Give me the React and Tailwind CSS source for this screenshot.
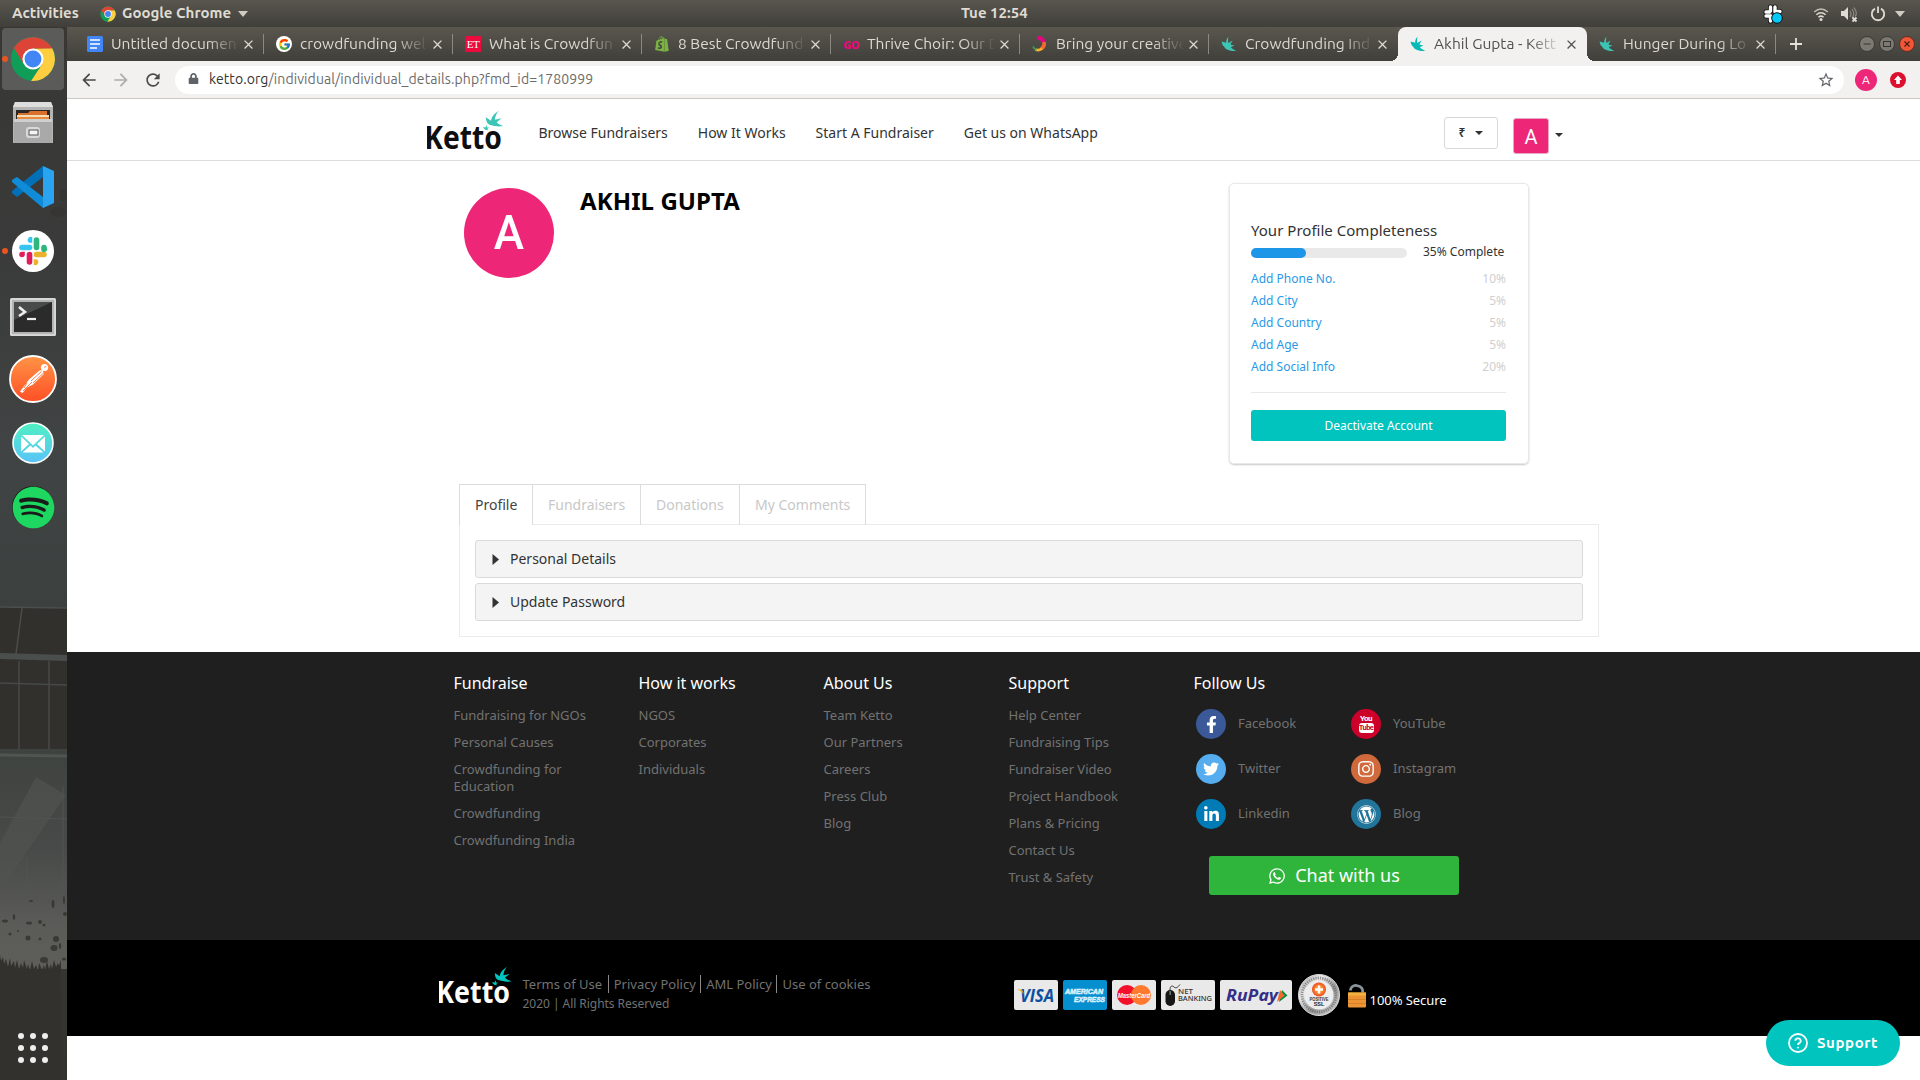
import React from "react";
import {
  FaFacebookF,
  FaTwitter,
  FaLinkedinIn,
  FaInstagram,
  FaWordpress,
  FaWhatsapp,
  FaShopify,
  FaSpotify,
  FaLock,
} from "react-icons/fa";
import { FcGoogle } from "react-icons/fc";
import { MdArrowBack, MdArrowForward, MdRefresh, MdStarBorder, MdClose } from "react-icons/md";

const UI = "font-['Ubuntu','Noto_Sans',sans-serif]";

function ChromeLogo({ className }) {
  return (
    <svg viewBox="0 0 48 48" className={className}>
      <circle cx="24" cy="24" r="23" fill="#0f9d58" />
      <path d="M43.9 12.500A23 23 0 0 1 22 46.900L33.500 29.500L24 13Z" fill="#ffcd40" />
      <path d="M4.100 12.500A23 23 0 0 1 43.900 13H24L14.500 29.500Z" fill="#db4437" />
      <circle cx="24" cy="24" r="11" fill="#fff" />
      <circle cx="24" cy="24" r="8.800" fill="#4285f4" />
    </svg>
  );
}

function KettoLogo({ className, color, bird }) {
  return (
    <svg viewBox="0 0 220 115" className={className} preserveAspectRatio="none">
      <text
        x="-8"
        y="112"
        fontSize="92"
        fontWeight="700"
        fontFamily="'Noto Sans',sans-serif"
        textLength="222"
        lengthAdjust="spacingAndGlyphs"
        fill={color}
      >
        Ketto
      </text>
      <g fill={bird}>
        <path d="M205 2 C190 12 184 20 183 31 L168 21 C169 36 174 42 184 44 C197 48 208 48 219 46 C208 43 202 39 199 35 L213 24 L194 28 C195 18 198 10 205 2Z" />
        <path d="M159 49 L167 50 L171 43 L172 50 L178 50 L173 54 L174 58 L166 57 Z" />
      </g>
    </svg>
  );
}

function BirdIcon({ color }) {
  return (
    <svg viewBox="0 0 16 16" className="size-4 shrink-0" fill={color}>
      <path d="M7.6 .6 C5.8 2.4 5 4.6 5.2 6.8 L0.6 5.4 C1 8.2 1.8 9.4 3 10.4 C4.5 13.6 9.5 15.4 15.6 14.8 C13 14 11 12.6 9.8 11 L13.6 9.8 L9.4 8.6 L11.6 4.6 L7.4 7 C6.8 4.8 7 2.6 7.6 .6Z" />
    </svg>
  );
}

function DocsIcon() {
  return (
    <svg viewBox="0 0 16 16" className="size-4 shrink-0">
      <rect width="16" height="16" rx="1.5" fill="#4285f4" />
      <path d="M3 4h10M3 8h10M3 12h7" stroke="#fff" strokeWidth="1.7" />
    </svg>
  );
}

function GoogleIcon() {
  return (
    <span className="flex size-4 shrink-0 items-center justify-center rounded-full bg-white">
      <FcGoogle className="size-[13px]" />
    </span>
  );
}

function EtIcon() {
  return (
    <span className="flex size-4 shrink-0 items-center justify-center bg-[#ec0b3f] font-['Liberation_Serif',serif] text-[11px] leading-none tracking-tighter text-white">
      ET
    </span>
  );
}

function ShopifyIcon() {
  return <FaShopify className="size-4 shrink-0 text-[#7ab342]" />;
}

function GoIcon() {
  return (
    <span className="flex size-4 shrink-0 items-center justify-center font-['Noto_Sans',sans-serif] text-[11px] font-extrabold leading-none tracking-tighter text-[#f0047f]">
      GO
    </span>
  );
}

function SwirlIcon() {
  return (
    <svg viewBox="0 0 16 16" className="size-4 shrink-0" fill="none" strokeWidth="3.6">
      <path d="M5.5 2 C9 1.4 11.5 4 11.6 7" stroke="#e0087f" strokeWidth="4.2" />
      <path d="M12 6 C12.6 9 11.5 11.5 9 12.8" stroke="#f26a2e" />
      <path d="M10 12.4 C7.5 14.4 5 14.4 3.5 13.4" stroke="#f6b32f" strokeWidth="2.6" />
      <path d="M4.5 14 C2.6 13.4 1.4 12 1 10.4" stroke="#36a651" strokeWidth="1.8" />
    </svg>
  );
}

const TABS = [
  { icon: <DocsIcon />, title: "Untitled documen" },
  { icon: <GoogleIcon />, title: "crowdfunding wel" },
  { icon: <EtIcon />, title: "What is Crowdfun" },
  { icon: <ShopifyIcon />, title: "8 Best Crowdfund" },
  { icon: <GoIcon />, title: "Thrive Choir: Our D" },
  { icon: <SwirlIcon />, title: "Bring your creative" },
  { icon: <BirdIcon color="#3cc4b4" />, title: "Crowdfunding Ind" },
  { icon: <BirdIcon color="#05b9b6" />, title: "Akhil Gupta - Kett", active: true },
  { icon: <BirdIcon color="#3cc4b4" />, title: "Hunger During Lo" },
];

function BrowserTab({ icon, title, active, divider }) {
  return (
    <div
      className={
        active
          ? "relative flex h-full w-[189px] shrink-0 items-center rounded-t-lg bg-[#f2f1ef] pl-3 text-[#51514d]"
          : "relative flex h-full w-[189px] shrink-0 items-center pl-3 text-[#dcdad3]"
      }
    >
      {icon}
      <span className="ml-2 w-[130px] shrink-0 whitespace-nowrap text-[15.5px] leading-5 [mask-image:linear-gradient(to_right,#000_74%,transparent_99%)]">
        {title}
      </span>
      <MdClose className="size-[15px] shrink-0" />
      {divider && <span className="absolute right-0 top-[7px] h-5 w-px bg-[#8b8982]" />}
      {active && (
        <>
          <span className="absolute -left-2 bottom-0 size-2 bg-[radial-gradient(circle_at_0_0,transparent_8px,#f2f1ef_8px)]" />
          <span className="absolute -right-2 bottom-0 size-2 bg-[radial-gradient(circle_at_100%_0,transparent_8px,#f2f1ef_8px)]" />
        </>
      )}
    </div>
  );
}

function SystemBar() {
  return (
    <header
      className={`${UI} flex h-[27px] shrink-0 items-center bg-gradient-to-b from-[#59564f] to-[#403f3a] text-[15px] font-bold text-[#dfdbd2]`}
    >
      <div className="flex w-[900px] items-center">
        <span className="ml-3 w-[68px]">Activities</span>
        <ChromeLogo className="ml-5 size-[16px]" />
        <span className="ml-[6px] w-[112px] whitespace-nowrap">Google Chrome</span>
        <svg viewBox="0 0 10 6" className="ml-[4px] h-[6px] w-[10px]" fill="#cfccc4">
          <path d="M0 0h10L5 6z" />
        </svg>
      </div>
      <div className="w-[190px] whitespace-nowrap pl-[61px]">Tue 12:54</div>
      <div className="ml-auto flex items-center pr-[15px]">
        <svg viewBox="0 0 20 20" className="mr-[30px] size-5">
          <g stroke="#111" strokeWidth="5" strokeLinecap="round">
            <path d="M7.500 3v4M12 3v5M3 8h4M13 7.500h4M3 12h5M7.500 13v4" />
          </g>
          <g stroke="#fff" strokeWidth="3.400" strokeLinecap="round">
            <path d="M7.500 3v4M12 3v5M3 8h4M13 7.500h4M3 12h5M7.500 13v4" />
          </g>
          <circle cx="14" cy="14" r="5.300" fill="#00c8f8" stroke="#111" />
        </svg>
        <svg viewBox="0 0 16 16" className="mr-[11px] size-4" fill="none" stroke="#dfdbd2" strokeWidth="1.500">
          <path d="M1.200 6 Q8 0 14.800 6" opacity=".8" />
          <path d="M3.400 8.800 Q8 4.600 12.600 8.800" />
          <path d="M5.400 11.200 Q8 9 10.600 11.200" />
          <circle cx="8" cy="13.600" r="1.500" fill="#dfdbd2" stroke="none" />
        </svg>
        <svg viewBox="0 0 18 18" className="mr-[12px] size-[18px]" fill="none" stroke="#dfdbd2" strokeWidth="1.200">
          <path d="M1 6h3l4-4v13l-4-4H1z" fill="#dfdbd2" stroke="none" />
          <path d="M10 6q2 3 0 6M12 4q3.500 5 0 9M14 2.500q4 6 1 9" opacity=".45" />
          <path d="M12.500 12.500l4 4M16.500 12.500l-4 4" strokeWidth="1.800" />
        </svg>
        <svg viewBox="0 0 16 16" className="mr-[9px] size-4" fill="none" stroke="#dfdbd2" strokeWidth="1.800">
          <path d="M5 2.600a6.200 6.200 0 1 0 6 0M8 .5v6.500" />
        </svg>
        <svg viewBox="0 0 10 6" className="h-[6px] w-[10px]" fill="#cfccc4">
          <path d="M0 0h10L5 6z" />
        </svg>
      </div>
    </header>
  );
}

const DEBRIS = [
  [5, 362, 3, 1.5], [14, 358, 1.2, 3], [29, 364, 3, 1.5], [31, 342, 2, 1], [40, 363, 2, 2], [44, 366, 1.5, 1.5],
  [53, 345, 1.5, 4], [64, 341, 1, 4], [65, 355, 2, 2], [56, 380, 3, 3], [54, 389, 3.5, 3], [60, 387, 1.2, 3],
  [44, 401, 4, 3], [28, 379, 2.5, 2.5], [10, 375, 1.5, 1.5], [18, 372, 1, 1], [40, 380, 1.5, 1.5], [64, 400, 2, 1.5],
];

function DockBackdrop() {
  return (
    <svg viewBox="0 0 67 1053" className="absolute inset-0 h-full w-full" preserveAspectRatio="none">
      <defs>
        <linearGradient id="dockBase" x1="0" y1="0" x2="0" y2="1">
          <stop offset="0" stopColor="#383734" />
          <stop offset=".2" stopColor="#393a39" />
          <stop offset=".4" stopColor="#414444" />
          <stop offset=".55" stopColor="#3c403f" />
          <stop offset="1" stopColor="#33332f" />
        </linearGradient>
        <linearGradient id="dockField" x1="0" y1="0" x2="0" y2="1">
          <stop offset="0" stopColor="#3f4340" />
          <stop offset=".45" stopColor="#474a48" />
          <stop offset=".8" stopColor="#5b5b58" />
          <stop offset="1" stopColor="#5e5e59" />
        </linearGradient>
      </defs>
      <rect width="67" height="1053" fill="url(#dockBase)" />
      <g fill="#34322f" opacity=".6">
        <ellipse cx="58" cy="185" rx="8" ry="5" />
        <ellipse cx="26" cy="105" rx="6" ry="4" />
        <ellipse cx="50" cy="170" rx="5" ry="4" />
        <ellipse cx="63" cy="168" rx="4" ry="6" />
        <ellipse cx="32" cy="229" rx="3" ry="2" />
      </g>
      <rect y="580" width="67" height="147" fill="#32302d" />
      <path d="M0 580L67 581" stroke="#4b4f4f" strokeWidth="1.500" />
      <path d="M22 581L16 627" stroke="#4b4d4b" strokeWidth="1.500" />
      <path d="M0 626L67 628V634L0 632Z" fill="#4a4e4d" />
      <path d="M0 656L67 658M19 634V726M49 634V726" stroke="#464947" strokeWidth="1.500" />
      <rect y="722" width="67" height="220" fill="url(#dockField)" />
      <path d="M0 728L67 729" stroke="#505452" strokeWidth="3" />
      <path d="M36 750L66 768L0 864V816Z" fill="#50524e" opacity=".7" />
      <path d="M0 790L67 792M27 830V872M63 760V872" stroke="#505452" strokeWidth="1" />
      <g transform="translate(0 532)" fill="#3a3936">
        {DEBRIS.map(([x, y, rx, ry], i) => (
          <ellipse key={i} cx={x} cy={y} rx={rx} ry={ry} />
        ))}
      </g>
      <path
        d="M0 928l1 6 2-4 1 7 2-5 2 8 2-9 1 8 3-5 1 7 2-8 2 9 2-6 2 5 1-8 3 9 1-5 2 6 2-9 2 8 2-4 2 6 1-8 3 7 2-5 1 5 2-9 2 8 2-5 1 5 2-9 2 7 2-4 1 3 2-6V1053H0Z"
        fill="#32312d"
      />
    </svg>
  );
}

function FilesIcon() {
  return (
    <svg viewBox="0 0 44 44" className="size-[44px]">
      <path d="M4 1h36l2 5v36H2V6z" fill="#b5b5b5" />
      <path d="M4 1h36l2 5H2z" fill="#dedede" />
      <rect x="5" y="9" width="34" height="12" fill="#2b2724" />
      <path d="M7 12h10l2-2h17v10H7z" fill="#d9702b" />
      <path d="M6 14h32v5H6z" fill="#f5ddb5" />
      <path d="M6 16h32v2H6z" fill="#e8893c" />
      <rect x="3" y="18" width="38" height="24" fill="#a9a9a9" />
      <path d="M3 18h38v3H3z" fill="#cfcfcf" />
      <rect x="15" y="26" width="14" height="11" rx="3" fill="#d8d8d8" />
      <rect x="18" y="29" width="9" height="5" fill="#f4f4f4" stroke="#555" />
    </svg>
  );
}

function CodeIcon() {
  return (
    <svg viewBox="0 0 44 44" className="size-[44px]">
      <path d="M32 1L32 12L6 32L1 28V26Z" fill="#0270b8" />
      <path d="M32 43V32L6 12L1 15V17Z" fill="#0f8bd8" />
      <path d="M32 1L43 6V38L32 43Z" fill="#2aa3f0" />
    </svg>
  );
}

function SlackIcon() {
  return (
    <svg viewBox="0 0 42 42" className="size-[42px]">
      <circle cx="21" cy="21" r="21" fill="#fff" />
      <g strokeWidth="5.600" strokeLinecap="round">
        <path d="M10 17.500h7.500" stroke="#36c5f0" />
        <path d="M24.500 10v7.500" stroke="#2eb67d" />
        <path d="M24.500 24.500h7.500" stroke="#ecb22e" />
        <path d="M17.500 24.500v7.500" stroke="#e01e5a" />
      </g>
      <path d="M20.300 7.200v5.600h-2.800a2.800 2.800 0 1 1 2.800-5.600z" fill="#36c5f0" />
      <path d="M34.800 17.500a2.800 2.800 0 0 1-5.600 2.800v-2.800a2.800 2.800 0 0 1 5.600 0z" fill="#2eb67d" />
      <path d="M21.700 34.800v-5.600h2.800a2.800 2.800 0 1 1-2.800 5.600z" fill="#ecb22e" />
      <path d="M7.200 24.500a2.800 2.800 0 0 1 2.800-2.800h2.800v2.800a2.800 2.800 0 0 1-5.600 0z" fill="#e01e5a" />
    </svg>
  );
}

function TerminalIcon() {
  return (
    <svg viewBox="0 0 46 38" className="mt-1 h-[38px] w-[46px]">
      <rect width="46" height="38" rx="1.500" fill="#d6d6d6" />
      <rect x="2" y="2" width="42" height="34" fill="#b3b3b3" />
      <rect x="4" y="4" width="38" height="30" fill="#2a2b2a" />
      <path d="M4 4h38L4 22z" fill="#494b4a" />
      <path d="M9 9l6 5-6 4" fill="none" stroke="#eee" strokeWidth="2.500" />
      <path d="M17 21h9" stroke="#eee" strokeWidth="2.200" />
    </svg>
  );
}

function PostmanIcon() {
  return (
    <svg viewBox="0 0 48 48" className="size-[48px]">
      <defs>
        <linearGradient id="pm" x1="0" y1="0" x2="0" y2="1">
          <stop offset="0" stopColor="#ff9445" />
          <stop offset="1" stopColor="#ff4f26" />
        </linearGradient>
      </defs>
      <circle cx="24" cy="24" r="23" fill="url(#pm)" stroke="#fff" strokeWidth="1.800" />
      <circle cx="35.500" cy="12.500" r="3.600" fill="#fff" />
      <path d="M34 15L30.500 15.500 20 24.500 11 36.500 13.500 38 18 32.500 24 29.500 34.500 19.500Z" fill="#fff" />
      <path d="M32.500 16.500L22 26M34 18.500L24 28M18 28L15 33M14 36L23 27" stroke="#ff7038" strokeWidth=".9" />
      <path d="M35 12.500l2.500-1.500" stroke="#ff7038" strokeWidth=".8" />
    </svg>
  );
}

function MailIcon() {
  return (
    <svg viewBox="0 0 42 42" className="size-[42px]">
      <defs>
        <linearGradient id="ml" x1="0" y1="0" x2="0" y2="1">
          <stop offset="0" stopColor="#4ff0c2" />
          <stop offset="1" stopColor="#5ac3f8" />
        </linearGradient>
      </defs>
      <circle cx="21" cy="21" r="20" fill="url(#ml)" stroke="#fff" strokeWidth="1.600" />
      <path d="M10 13h22L21 23.500zM9 14.500L17 22 9 29.500zM33 14.500V29.500L25 22zM10.500 30.500L18.500 23.500 21 26l2.500-2.500 8 7z" fill="#fff" />
    </svg>
  );
}

function SpotifyIcon() {
  return (
    <span className="flex size-[42px] items-center justify-center rounded-full bg-[#1a1a1a]">
      <FaSpotify className="size-[43px] shrink-0 text-[#1ed760]" />
    </span>
  );
}

const DOCK = [
  { icon: <ChromeLogo className="size-[46px]" />, running: true, active: true },
  { icon: <FilesIcon /> },
  { icon: <CodeIcon /> },
  { icon: <SlackIcon />, running: true },
  { icon: <TerminalIcon /> },
  { icon: <PostmanIcon /> },
  { icon: <MailIcon /> },
  { icon: <SpotifyIcon /> },
];

function Dock() {
  return (
    <aside className="relative flex w-[67px] shrink-0 flex-col overflow-hidden bg-[#383734]">
      <DockBackdrop />
      {DOCK.map(({ icon, running, active }, i) => (
        <div key={i} className="relative flex h-16 w-[66px] items-center justify-center px-[2px] py-px">
          <div
            className={
              active
                ? "flex h-full w-full items-center justify-center rounded-[4px] bg-[#5b5b5a]"
                : "flex h-full w-full items-center justify-center"
            }
          >
            {icon}
          </div>
          {running && <span className="absolute left-[2px] top-[29px] size-[6px] rounded-full bg-[#e95420]" />}
        </div>
      ))}
      <div className="relative mb-[17px] ml-[18px] mt-auto grid w-[30px] grid-cols-3 gap-[6px]">
        {Array.from({ length: 9 }, (_, i) => (
          <span key={i} className="size-[6px] rounded-full bg-[#eeeeec]" />
        ))}
      </div>
    </aside>
  );
}

function TabStrip() {
  return (
    <div
      className={`${UI} flex h-[34px] shrink-0 items-center bg-gradient-to-b from-[#5a574f] to-[#403f3a] pl-[8px]`}
    >
      {TABS.map((t, i) => (
        <BrowserTab key={t.title} {...t} divider={i !== 6 && !t.active} />
      ))}
      <svg viewBox="0 0 12 12" className="ml-[14px] size-[12px]" stroke="#e6e3db" strokeWidth="1.800">
        <path d="M6 0v12M0 6h12" />
      </svg>
      <div className="ml-auto flex gap-[4px] pr-[5px]">
        <svg viewBox="0 0 16 16" className="size-4">
          <circle cx="8" cy="8" r="7.500" fill="#7b7972" stroke="#3b3a36" />
          <path d="M4.500 8h7" stroke="#35342f" />
        </svg>
        <svg viewBox="0 0 16 16" className="size-4">
          <circle cx="8" cy="8" r="7.500" fill="#7b7972" stroke="#3b3a36" />
          <rect x="4.500" y="5.500" width="7" height="5" fill="none" stroke="#35342f" />
        </svg>
        <svg viewBox="0 0 16 16" className="size-4">
          <circle cx="8" cy="8" r="7.500" fill="#ee5637" stroke="#5c2f22" />
          <path d="M5.500 5.500l5 5M10.500 5.500l-5 5" stroke="#4a1c10" strokeWidth="1.200" />
        </svg>
      </div>
    </div>
  );
}

function Toolbar() {
  return (
    <div className={`${UI} flex h-[38px] shrink-0 items-center border-b border-[#c9c8c6] bg-[#f2f1ef] pl-[12px]`}>
      <MdArrowBack className="size-5 text-[#4a4a48]" />
      <MdArrowForward className="ml-3 size-5 text-[#adacaa]" />
      <MdRefresh className="ml-3 size-5 text-[#4a4a48]" />
      <div className="ml-[12px] flex h-7 w-[1669px] items-center rounded-full bg-white pl-[13px] pr-[9px]">
        <FaLock className="mb-[2px] size-[11px] text-[#5f6368]" />
        <span className="mb-[2px] ml-[10px] whitespace-nowrap text-[14px] leading-5 tracking-[0.1px] text-[#6b6b6b]">
          <span className="text-[#333]">ketto.org</span>/individual/individual_details.php?fmd_id=1780999
        </span>
        <MdStarBorder className="ml-auto size-[18px] text-[#5f6368]" />
      </div>
      <span className="ml-[11px] flex size-[22px] items-center justify-center rounded-full bg-[#ee2677] text-[12px] text-white">
        A
      </span>
      <svg viewBox="0 0 16 16" className="ml-[13px] size-4">
        <circle cx="8" cy="8" r="8" fill="#dc0f2d" />
        <path d="M8 3.500L12 8H9.800v4H6.200V8H4z" fill="#fff" />
      </svg>
    </div>
  );
}

function Caret() {
  return (
    <svg viewBox="0 0 8 4" className="h-1 w-2" fill="#333">
      <path d="M0 0h8L4 4z" />
    </svg>
  );
}

function SiteHeader() {
  return (
    <nav className="flex h-[62px] shrink-0 border-b border-[#dcdcdc] pl-[360px] text-[14px] leading-5 text-[#333]">
      <KettoLogo className="mt-[11px] h-[40px] w-[77px]" color="#0f0f0f" bird="#3cc4b4" />
      <div className="ml-[34.5px] mt-[24px] flex gap-[30px] whitespace-nowrap">
        <a>Browse Fundraisers</a>
        <a>How It Works</a>
        <a>Start A Fundraiser</a>
        <a>Get us on WhatsApp</a>
      </div>
      <div className="ml-auto mr-[357px] flex">
        <div className="mt-[18px] flex h-8 w-[54px] items-center justify-center gap-[10px] rounded-[3px] border border-[#d8d8d8] text-[12px] font-semibold">
          ₹ <Caret />
        </div>
        <div className="ml-[15px] mt-[19px] flex h-[36px] w-[36px] items-center justify-center rounded-[3px] border border-[#e5a8c3] bg-[#ee2677] pt-[2px] font-['Roboto',sans-serif] text-[20px] text-white">
          A
        </div>
        <div className="ml-[6px] mt-[34px]">
          <Caret />
        </div>
      </div>
    </nav>
  );
}

const STEPS = [
  ["Add Phone No.", "10%"],
  ["Add City", "5%"],
  ["Add Country", "5%"],
  ["Add Age", "5%"],
  ["Add Social Info", "20%"],
];

function CompletenessCard() {
  return (
    <section className="mt-[22px] h-[281px] w-[300px] rounded-[5px] border border-[#e8e8e8] px-[21px] pt-[35px] shadow-[0_1px_2px_rgba(0,0,0,0.22)]">
      <div className="w-[255px]">
        <h3 className="text-[15px] leading-[22px] tracking-[0.02px] text-[#333]">Your Profile Completeness</h3>
        <div className="flex h-[22px] items-center">
          <div className="mt-[1px] h-[10px] w-[156px] rounded-full bg-[#e9e9e9]">
            <div className="h-full w-[55px] rounded-full bg-[#1e96e8]" />
          </div>
          <span className="ml-[16px] whitespace-nowrap text-[12px] text-[#333]">35% Complete</span>
        </div>
        <ul className="mt-[5px] text-[12px] leading-[22px]">
          {STEPS.map(([label, pct]) => (
            <li key={label} className="flex justify-between">
              <span className="text-[#2a99e6]">{label}</span>
              <span className="text-[#cfcfcf]">{pct}</span>
            </li>
          ))}
        </ul>
        <hr className="mt-[14px] border-[#e8e8e8]" />
        <button className="mt-[17px] h-[31px] w-[255px] rounded-[3px] bg-[#01c4bf] text-[12px] text-white">
          Deactivate Account
        </button>
      </div>
    </section>
  );
}

function ProfileTabs() {
  const base = "flex items-center border-r border-t border-[#dcdcdc] pl-[15px] pb-[2px]";
  return (
    <section className="ml-[392px] mt-[20px] w-[1140px] text-[14px]">
      <div className="flex h-[41px] items-stretch">
        <div className={`${base} relative z-10 w-[74px] border-l bg-white text-[#444]`}>Profile</div>
        <div className={`${base} w-[108px] text-[#c8c8c8]`}>Fundraisers</div>
        <div className={`${base} w-[99px] text-[#c8c8c8]`}>Donations</div>
        <div className={`${base} w-[126px] whitespace-nowrap text-[#c8c8c8]`}>My Comments</div>
      </div>
      <div className="-mt-px flex h-[113px] flex-col gap-[5px] border border-[#ebebeb] p-[15px]">
        {["Personal Details", "Update Password"].map((label) => (
          <div
            key={label}
            className="flex h-[38px] items-center rounded-[3px] border border-[#dadada] bg-[#f4f4f4] pl-[16px] text-[#333]"
          >
            <svg viewBox="0 0 7 11" className="h-[11px] w-[7px]" fill="#333">
              <path d="M.500 0L7 5.500L.500 11z" />
            </svg>
            <span className="mb-[2px] ml-[11px]">{label}</span>
          </div>
        ))}
      </div>
    </section>
  );
}

const COLUMNS = [
  {
    title: "Fundraise",
    links: ["Fundraising for NGOs", "Personal Causes", "Crowdfunding for Education", "Crowdfunding", "Crowdfunding India"],
  },
  { title: "How it works", links: ["NGOS", "Corporates", "Individuals"] },
  { title: "About Us", links: ["Team Ketto", "Our Partners", "Careers", "Press Club", "Blog"] },
  {
    title: "Support",
    links: [
      "Help Center",
      "Fundraising Tips",
      "Fundraiser Video",
      "Project Handbook",
      "Plans & Pricing",
      "Contact Us",
      "Trust & Safety",
    ],
  },
];

function YouTubeMark() {
  return (
    <span className="flex flex-col items-center font-['Roboto',sans-serif] font-bold leading-none text-white">
      <span className="text-[8px] leading-[7px] tracking-[-0.5px]">You</span>
      <span className="mt-px flex h-[10px] w-[15px] items-center justify-center rounded-[3px] bg-white text-[7.5px] tracking-[-0.6px] text-[#cd0029]">
        Tube
      </span>
    </span>
  );
}

const SOCIAL = [
  { name: "Facebook", bg: "bg-[#3b5998]", icon: <FaFacebookF className="size-[17px]" /> },
  { name: "YouTube", bg: "bg-[#cd0029]", icon: <YouTubeMark /> },
  { name: "Twitter", bg: "bg-[#55acee]", icon: <FaTwitter className="size-[16px]" /> },
  { name: "Instagram", bg: "bg-[#d0693c]", icon: <FaInstagram className="size-[18px]" /> },
  { name: "Linkedin", bg: "bg-[#007bb6]", icon: <FaLinkedinIn className="size-[17px]" /> },
  { name: "Blog", bg: "bg-[#21759b]", icon: <FaWordpress className="size-[19px]" /> },
];

function FooterLinks() {
  return (
    <div className="flex h-[288px] shrink-0 bg-[#1f1f1f] pl-[386.5px] pt-[20px] text-[13px] text-[#727272]">
      {COLUMNS.map(({ title, links }) => (
        <div key={title} className="w-[185px] shrink-0 pr-[40px]">
          <h4 className="text-[16px] leading-[22px] text-white">{title}</h4>
          <ul className="mt-[13px] flex flex-col gap-[10px] leading-[17px]">
            {links.map((l) => (
              <li key={l}>{l}</li>
            ))}
          </ul>
        </div>
      ))}
      <div>
        <h4 className="text-[16px] leading-[22px] text-white">Follow Us</h4>
        <div className="ml-[2.5px] mt-[15px] grid grid-cols-[155px_155px] gap-y-[15px]">
          {SOCIAL.map(({ name, bg, icon }) => (
            <div key={name} className="flex items-center gap-[12px]">
              <span className={`${bg} flex size-[30px] items-center justify-center rounded-full text-white`}>{icon}</span>
              {name}
            </div>
          ))}
        </div>
        <button className="ml-[15.5px] mt-[27px] flex h-[39px] w-[250px] items-center justify-center gap-[9px] rounded-[3px] bg-[#30b53c] text-[18px] text-white">
          <FaWhatsapp className="size-[18px]" />
          Chat with us
        </button>
      </div>
    </div>
  );
}

function CardBox({ children, className }) {
  return <div className={`mt-[40px] h-[30px] shrink-0 overflow-hidden rounded-[2px] ${className}`}>{children}</div>;
}

function Payments() {
  return (
    <div className="flex gap-[5px]">
      <CardBox className="w-[44px] bg-[#e9e9e9]">
        <svg viewBox="0 0 44 30">
          <text x="6" y="21.500" fontSize="17" fontWeight="700" fontStyle="italic" fontFamily="'Open Sans','Noto Sans',sans-serif" textLength="34" lengthAdjust="spacingAndGlyphs" fill="#0d4fa0">
            VISA
          </text>
          <path d="M3 9.500h5l2 5q-2-3.500-7-5z" fill="#f7a51c" />
        </svg>
      </CardBox>
      <CardBox className="w-[44px] bg-[#058fcf]">
        <svg viewBox="0 0 44 30">
          <g fontSize="7.500" fontWeight="700" fontStyle="italic" fontFamily="'Liberation Sans',sans-serif" fill="#bfe6f8" stroke="#e6f6fd" strokeWidth=".5">
            <text x="2" y="14" textLength="38" lengthAdjust="spacingAndGlyphs">AMERICAN</text>
            <text x="11" y="21.500" textLength="31" lengthAdjust="spacingAndGlyphs">EXPRESS</text>
          </g>
        </svg>
      </CardBox>
      <CardBox className="w-[44px] bg-[#e9e9e9]">
        <svg viewBox="0 0 44 30">
          <circle cx="15" cy="15" r="10" fill="#f4102d" />
          <circle cx="29" cy="15" r="10" fill="#ff7a2e" />
          <text x="6" y="17.700" fontSize="6.800" fontWeight="700" fontStyle="italic" fontFamily="'Liberation Sans',sans-serif" textLength="32" lengthAdjust="spacingAndGlyphs" fill="#fff">
            MasterCard
          </text>
        </svg>
      </CardBox>
      <CardBox className="w-[54px] bg-[#e9e9e9]">
        <svg viewBox="0 0 54 30">
          <rect x="4.500" y="10" width="9.500" height="16" rx="4.700" fill="#161616" />
          <path d="M9 10C9 6 11 5 13 7S17 7 19 4.500" fill="none" stroke="#222" strokeWidth=".9" />
          <path d="M9.200 11v4" stroke="#777" strokeWidth="1.500" />
          <g fontSize="7" fontFamily="'Noto Sans',sans-serif" fontWeight="500" fill="#333">
            <text x="17" y="14" textLength="15" lengthAdjust="spacingAndGlyphs">NET</text>
            <text x="17" y="21" textLength="34" lengthAdjust="spacingAndGlyphs">BANKING</text>
          </g>
        </svg>
      </CardBox>
      <CardBox className="w-[72px] bg-[#e9e9e9]">
        <svg viewBox="0 0 72 30">
          <text x="6" y="20.500" fontSize="16.500" fontWeight="700" fontStyle="italic" fontFamily="'Noto Sans',sans-serif" textLength="52" lengthAdjust="spacingAndGlyphs" fill="#352f87">
            RuPay
          </text>
          <path d="M62 10l5.500 5.500L59 22z" fill="#0e8a44" />
          <path d="M60 10l4.500 5.500L57 22z" fill="#f26a2a" />
        </svg>
      </CardBox>
      <svg viewBox="0 0 42 42" className="ml-px mt-[34px] size-[42px] shrink-0">
        <defs>
          <linearGradient id="sslRing" x1="0" y1="0" x2="1" y2="1">
            <stop offset="0" stopColor="#8f8f8f" />
            <stop offset=".3" stopColor="#ececec" />
            <stop offset=".6" stopColor="#9a9a9a" />
            <stop offset="1" stopColor="#e0e0e0" />
          </linearGradient>
          <radialGradient id="sslGlow">
            <stop offset="0" stopColor="#ffd24a" />
            <stop offset="1" stopColor="#ef4a1f" />
          </radialGradient>
        </defs>
        <circle cx="21" cy="21" r="20.500" fill="url(#sslRing)" stroke="#d8d8d8" />
        <circle cx="21" cy="21" r="17" fill="none" stroke="#5a5a5a" strokeWidth="2.800" strokeDasharray="1.300 1" opacity=".6" />
        <circle cx="21" cy="21" r="14.500" fill="#ededed" />
        <circle cx="21" cy="15.500" r="7" fill="url(#sslGlow)" />
        <path d="M21 11.500v8M17 15.500h8" stroke="#fff" strokeWidth="2.400" />
        <text x="21" y="27.300" fontSize="4.500" fontWeight="700" textAnchor="middle" fontFamily="'Liberation Sans',sans-serif" textLength="19" lengthAdjust="spacingAndGlyphs" fill="#333">
          POSITIVE
        </text>
        <text x="21" y="32" fontSize="5.500" fontWeight="700" textAnchor="middle" fontFamily="'Liberation Sans',sans-serif" fill="#222">
          SSL
        </text>
      </svg>
      <svg viewBox="0 0 20 24" className="ml-[2px] mt-[44px] h-6 w-5 shrink-0">
        <path d="M4 8.500C2 3 7 1 10 1.600C14 2 16.300 5 15.500 8.500" fill="none" stroke="#87949a" strokeWidth="2.800" />
        <path d="M1.500 6.500h4v2.200h-4z" fill="#000" />
        <rect x="1" y="8.500" width="18" height="15" rx="1" fill="#ec9433" />
        <path d="M1 8.500h18v3H1z" fill="#f3b23f" />
        <path d="M1 15.500h18M1 19.500h18" stroke="#d37b22" strokeWidth=".8" />
      </svg>
      <span className="-ml-[2px] mt-[50px] whitespace-nowrap text-[13px] leading-5 tracking-[-0.05px] text-white">100% Secure</span>
    </div>
  );
}

function FooterBottom() {
  return (
    <div className="flex h-[96px] shrink-0 bg-black pl-[372px] text-[#727272]">
      <KettoLogo className="mt-[26px] h-[38px] w-[73px]" color="#ffffff" bird="#01c4bf" />
      <div className="ml-[10.5px] mt-[35px] w-[491px] whitespace-nowrap">
        <div className="flex h-[18px] items-center text-[13px] leading-[18px]">
          <span className="border-r border-[#8a8a8a] pr-[6px]">Terms of Use</span>
          <span className="border-r border-[#8a8a8a] px-[4.7px]">Privacy Policy</span>
          <span className="border-r border-[#8a8a8a] px-[4.7px]">AML Policy</span>
          <span className="pl-[5px]">Use of cookies</span>
        </div>
        <div className="mt-[2px] text-[12px] leading-[18px] tracking-[-0.04px]">2020 | All Rights Reserved</div>
      </div>
      <Payments />
    </div>
  );
}

function SupportButton() {
  return (
    <button
      className={`${UI} absolute bottom-[14px] right-[20px] flex h-[46px] w-[134px] items-center rounded-full bg-[#01c4bf] pl-[22px] text-[15px] font-bold tracking-[0.6px] text-white`}
    >
      <svg viewBox="0 0 20 20" className="size-5" fill="none" stroke="#fff" strokeWidth="1.800">
        <circle cx="10" cy="10" r="9" />
        <path d="M7.300 7.800a2.700 2.500 0 1 1 3.900 2.300q-1.200.6-1.200 1.900" />
        <circle cx="10" cy="14.600" r=".6" fill="#fff" strokeWidth="1" />
      </svg>
      <span className="ml-[9px]">Support</span>
    </button>
  );
}

export default function App() {
  return (
    <div className="relative flex h-[1080px] w-[1920px] flex-col overflow-hidden bg-white font-['Noto_Sans',sans-serif]">
      <SystemBar />
      <div className="flex min-h-0 flex-1">
        <Dock />
        <main className="flex min-w-0 flex-1 flex-col">
          <TabStrip />
          <Toolbar />
          <SiteHeader />
          <div className="h-[491px] shrink-0">
            <div className="flex pl-[397px]">
              <div className="mt-[27px] flex size-[90px] items-center justify-center rounded-full bg-[#ee2677] font-['Roboto',sans-serif] text-[48px] font-medium text-white">
                <span className="scale-x-[0.95]">A</span>
              </div>
              <h1 className="ml-[26px] mt-[23px] w-[649px] text-[24px] font-bold leading-[33px] tracking-[0.08px] text-black">
                AKHIL GUPTA
              </h1>
              <CompletenessCard />
            </div>
            <ProfileTabs />
          </div>
          <FooterLinks />
          <FooterBottom />
        </main>
      </div>
      <SupportButton />
    </div>
  );
}
